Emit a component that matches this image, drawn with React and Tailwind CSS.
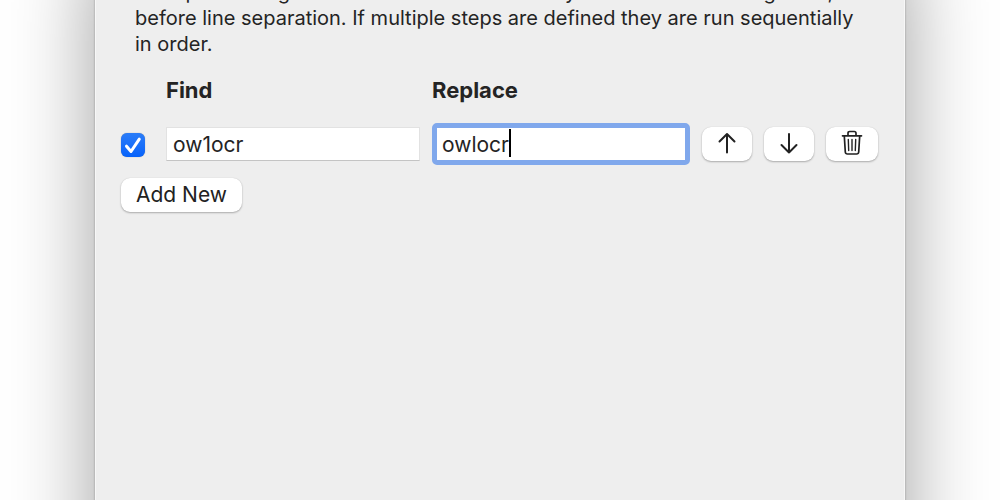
import React, { useState } from "react";

const columns =
  "grid grid-cols-[33px_254fr_258fr_50px_50px_52px] gap-x-3 items-center";

const buttonStyle =
  "flex h-[34px] items-center justify-center rounded-[9px] bg-white text-[21px] text-[#222] shadow-[0_1px_2px_rgba(0,0,0,0.28),0_0_1px_rgba(0,0,0,0.15)]";

function Stroke({ children, width = 2 }) {
  return (
    <svg
      width="24"
      height="28"
      viewBox="0 0 24 28"
      fill="none"
      stroke="currentColor"
      strokeWidth={width}
      strokeLinecap="round"
      strokeLinejoin="round"
      aria-hidden="true"
    >
      {children}
    </svg>
  );
}

export default function App() {
  const [enabled, setEnabled] = useState(true);
  const [find, setFind] = useState("ow1ocr");
  const [replace, setReplace] = useState("owlocr");

  return (
    <div className="h-screen overflow-hidden bg-white font-['Inter',sans-serif] leading-[26px] text-[#242424]">
      <main className="mx-auto -mt-20 min-h-[150vh] w-[81%] border-x border-[#f7f7f7] bg-[#eeeeee] pt-[59px] pr-[26px] pl-[25px] shadow-[0_0_2px_rgba(0,0,0,0.3),0_30px_80px_rgba(0,0,0,0.38)]">
        <p className="ml-[14px] text-[20px] whitespace-nowrap">
          Post-processing functions are run immediately after the initial recognition,
          <br />
          before line separation. If multiple steps are defined they are run sequentially
          <br />
          in order.
        </p>

        <div className={`${columns} mt-5 text-[22px] font-bold`}>
          <label htmlFor="find" className="col-start-2">Find</label>
          <label htmlFor="replace">Replace</label>
        </div>

        <div className={`${columns} mt-5 text-[21px]`}>
          <label className="relative mt-[2px] block h-6 w-6">
            <input
              type="checkbox"
              aria-label="Enable step"
              checked={enabled}
              onChange={(e) => setEnabled(e.target.checked)}
              className="peer block h-6 w-6 appearance-none rounded-[6px] bg-white shadow-[0_0_1px_rgba(0,0,0,0.4)] checked:bg-linear-to-b checked:from-[#2a7cf8] checked:to-[#0562fb]"
            />
            <svg
              className="pointer-events-none absolute inset-0 hidden peer-checked:block"
              width="24"
              height="24"
              viewBox="0 0 24 24"
              fill="none"
              stroke="white"
              strokeWidth="3"
              strokeLinecap="round"
              strokeLinejoin="round"
              aria-hidden="true"
            >
              <path d="M5.5 13.2 10 18.5 18.3 6.2" />
            </svg>
          </label>
          <input
            id="find"
            type="text"
            value={find}
            onChange={(e) => setFind(e.target.value)}
            className="h-[34px] w-full min-w-0 border border-[#e2e2e2] border-b-[#c4c4c4] bg-white px-[6px] outline-none"
          />
          <div className="relative">
            <input
              id="replace"
              type="text"
              value={replace}
              onChange={(e) => setReplace(e.target.value)}
              className="block h-[42px] w-full min-w-0 rounded-[5px] border-[5px] border-[#80a8ec] bg-white px-[5px] caret-transparent outline-none"
            />
            <span className="absolute top-[6px] left-[77px] h-7 w-[2px] bg-black" />
          </div>
          <button type="button" aria-label="Move up" className={buttonStyle}>
            <Stroke>
              <path d="M12 22.5V4M4.5 11.5 12 4l7.5 7.5" />
            </Stroke>
          </button>
          <button type="button" aria-label="Move down" className={buttonStyle}>
            <Stroke>
              <path d="M12 4v18.5M4.5 15 12 22.5l7.5-7.5" />
            </Stroke>
          </button>
          <button type="button" aria-label="Delete" className={buttonStyle}>
            <Stroke width={1.7}>
              <path d="M2.5 5.8h19M8 5.5V3.2Q8 1.5 9.7 1.5h4.6Q16 1.5 16 3.2v2.3M4.3 6l1 16Q5.5 24 7.4 24h9.2q1.9 0 2.1-2l1-16" />
              <path strokeWidth="1.4" d="m8.3 9.5.4 11M12 9.5v11M15.7 9.5l-.4 11" />
            </Stroke>
          </button>
        </div>

        <button type="button" className={`${buttonStyle} mt-[13px] px-[15px]`}>
          Add New
        </button>
      </main>
    </div>
  );
}
